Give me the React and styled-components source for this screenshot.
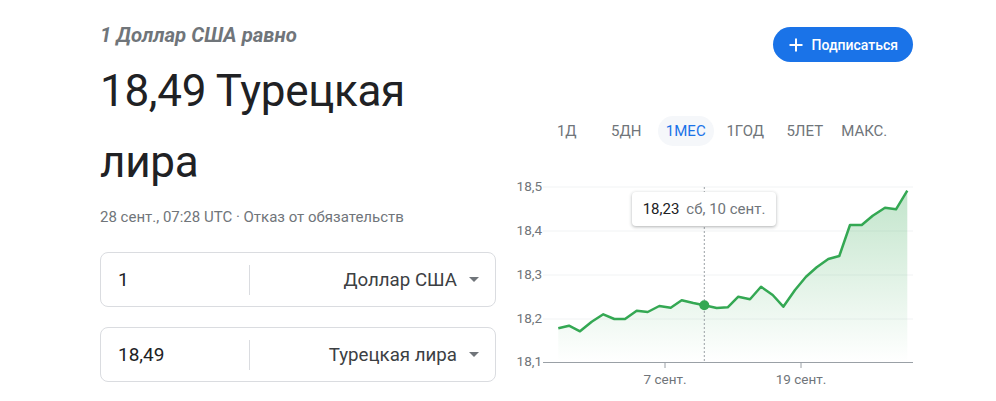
import React from 'react';
import styled, { createGlobalStyle } from 'styled-components';

const GlobalStyle = createGlobalStyle`
  html, body {
    margin: 0;
    padding: 0;
    background: #fff;
    font-family: Roboto, "Liberation Sans", Arial, sans-serif;
  }
`;

const Page = styled.div`
  display: flex;
  gap: 4px;
  width: 996px;
  height: 401px;
  padding-left: 100px;
  box-sizing: border-box;
  overflow: hidden;
`;

const LeftColumn = styled.div`
  display: flex;
  flex-direction: column;
  width: 396px;
  padding-top: 23px;
`;

const Lead = styled.div`
  font-size: 20.4px;
  line-height: 24px;
  font-weight: 700;
  font-style: italic;
  color: #70757a;
`;

const Rate = styled.div`
  margin-top: 9px;
  font-size: 44px;
  line-height: 71px;
  letter-spacing: -0.3px;
  color: #202124;
`;

const Stamp = styled.div`
  margin-top: 9px;
  font-size: 15px;
  line-height: 20px;
  color: #70757a;
`;

const Converter = styled.div`
  display: flex;
  flex-direction: column;
  gap: 20px;
  margin-top: 25px;
`;

const Field = styled.div`
  display: flex;
  align-items: center;
  height: 55px;
  box-sizing: border-box;
  border: 1px solid #dadce0;
  border-radius: 8px;
`;

const Amount = styled.div`
  width: 131px;
  padding-left: 17px;
  font-size: 19px;
  color: #202124;
`;

const Divider = styled.div`
  width: 1px;
  height: 30px;
  background: #dadce0;
`;

const Currency = styled.div`
  flex: 1;
  display: flex;
  align-items: center;
  justify-content: flex-end;
  gap: 12px;
  padding-right: 16px;
  font-size: 18.7px;
  color: #3c4043;
`;

const Caret = styled.span`
  width: 0;
  height: 0;
  border-left: 5px solid transparent;
  border-right: 5px solid transparent;
  border-top: 5px solid #70757a;
`;

const RightColumn = styled.div`
  display: flex;
  flex-direction: column;
  width: 413px;
`;

const ButtonRow = styled.div`
  display: flex;
  justify-content: flex-end;
  margin-top: 27px;
`;

const Subscribe = styled.button`
  display: flex;
  align-items: center;
  gap: 8px;
  height: 35px;
  padding: 0 15px 0 15px;
  border: none;
  border-radius: 18px;
  background: #1a73e8;
  color: #fff;
  font-family: Roboto, "Liberation Sans", Arial, sans-serif;
  font-size: 14px;
  font-weight: 500;
`;

const Tabs = styled.div`
  display: grid;
  grid-template-columns: repeat(6, 59.5px);
  margin-top: 54px;
  margin-left: 37px;
`;

const Tab = styled.div`
  justify-self: center;
  height: 30px;
  line-height: 30px;
  padding: 0 8px;
  border-radius: 15px;
  font-size: 15px;
  color: ${(p) => (p.$active ? '#1a73e8' : '#70757a')};
  background: ${(p) => (p.$active ? '#f5f7fa' : 'transparent')};
`;

const ChartBox = styled.div`
  position: relative;
  margin-top: 29px;
  width: 413px;
  height: 215px;
`;

const Tooltip = styled.div`
  position: absolute;
  left: 132px;
  top: 17px;
  width: 144px;
  height: 34px;
  display: flex;
  align-items: center;
  justify-content: center;
  gap: 7px;
  background: #fff;
  border-radius: 4px;
  box-shadow: 0 1px 3px rgba(60, 64, 67, 0.3), 0 1px 4px rgba(60, 64, 67, 0.12);
  font-size: 15px;
  white-space: nowrap;
`;

const TipValue = styled.span`
  color: #202124;
`;

const TipDate = styled.span`
  color: #70757a;
`;

const points = [
  [58.3, 153.3], [69, 150.7], [80, 156.3], [91.7, 146.7], [103.3, 139.3],
  [114.3, 144], [125, 144], [136.7, 135.7], [147.7, 137], [159.3, 131],
  [170.7, 132.7], [181.7, 125.3], [193.3, 128], [204.3, 130.3], [216.7, 133],
  [227.7, 132.3], [238.3, 121.7], [250, 124.3], [261, 111.7], [272.7, 120],
  [283.3, 131.7], [295, 115], [306, 101.7], [316.7, 92.3], [328.3, 84],
  [339.3, 81], [350, 50], [361.7, 50], [372.7, 40.7], [385, 32.7],
  [396, 34.3], [407.3, 15.7],
];

const yTicks = [
  ['18,5', 12],
  ['18,4', 56],
  ['18,3', 100],
  ['18,2', 144],
  ['18,1', 187],
];

const Chart = () => {
  const line = points.map(([x, y], i) => `${i ? 'L' : 'M'}${x} ${y}`).join(' ');
  const last = points[points.length - 1];
  const area = `${line} L${last[0]} 187 L${points[0][0]} 187 Z`;
  return (
    <svg width="413" height="215" viewBox="0 0 413 215">
      <defs>
        <linearGradient id="fill" x1="0" y1="0" x2="0" y2="1">
          <stop offset="0" stopColor="#34a853" stopOpacity="0.3" />
          <stop offset="1" stopColor="#34a853" stopOpacity="0" />
        </linearGradient>
      </defs>
      {yTicks.slice(0, 4).map(([, y]) => (
        <line key={y} x1="43" x2="413" y1={y} y2={y} stroke="#f1f3f4" strokeWidth="1" />
      ))}
      {yTicks.map(([label, y]) => (
        <text key={label} x="42" y={y} textAnchor="end" dominantBaseline="middle"
          fontSize="13.5" fill="#70757a" fontFamily="Roboto, Arial, sans-serif">
          {label}
        </text>
      ))}
      <path d={area} fill="url(#fill)" />
      <line x1="204.3" x2="204.3" y1="12" y2="187" stroke="#9aa0a6" strokeWidth="1" strokeDasharray="2 2" />
      <path d={line} fill="none" stroke="#34a853" strokeWidth="2.5" strokeLinejoin="round" />
      <line x1="43" x2="413" y1="187.5" y2="187.5" stroke="#9aa0a6" strokeWidth="1" />
      <line x1="165" x2="165" y1="187" y2="193" stroke="#9aa0a6" strokeWidth="1" />
      <line x1="301" x2="301" y1="187" y2="193" stroke="#9aa0a6" strokeWidth="1" />
      <text x="165" y="205" textAnchor="middle" dominantBaseline="middle"
        fontSize="13.5" fill="#70757a" fontFamily="Roboto, Arial, sans-serif">7 сент.</text>
      <text x="301" y="205" textAnchor="middle" dominantBaseline="middle"
        fontSize="13.5" fill="#70757a" fontFamily="Roboto, Arial, sans-serif">19 сент.</text>
      <circle cx="204.3" cy="130.3" r="5" fill="#34a853" />
    </svg>
  );
};

const tabs = ['1Д', '5ДН', '1МЕС', '1ГОД', '5ЛЕТ', 'МАКС.'];

const App = () => (
  <>
    <GlobalStyle />
    <Page>
      <LeftColumn>
        <Lead>1 Доллар США равно</Lead>
        <Rate>18,49 Турецкая лира</Rate>
        <Stamp>28 сент., 07:28 UTC · Отказ от обязательств</Stamp>
        <Converter>
          <Field>
            <Amount>1</Amount>
            <Divider />
            <Currency>Доллар США<Caret /></Currency>
          </Field>
          <Field>
            <Amount>18,49</Amount>
            <Divider />
            <Currency>Турецкая лира<Caret /></Currency>
          </Field>
        </Converter>
      </LeftColumn>
      <RightColumn>
        <ButtonRow>
          <Subscribe>
            <svg width="16" height="16" viewBox="0 0 16 16">
              <path d="M8 1.5v13M1.5 8h13" stroke="#fff" strokeWidth="2" />
            </svg>
            Подписаться
          </Subscribe>
        </ButtonRow>
        <Tabs>
          {tabs.map((t) => (
            <Tab key={t} $active={t === '1МЕС'}>{t}</Tab>
          ))}
        </Tabs>
        <ChartBox>
          <Chart />
          <Tooltip>
            <TipValue>18,23</TipValue>
            <TipDate>сб, 10 сент.</TipDate>
          </Tooltip>
        </ChartBox>
      </RightColumn>
    </Page>
  </>
);

export default App;
